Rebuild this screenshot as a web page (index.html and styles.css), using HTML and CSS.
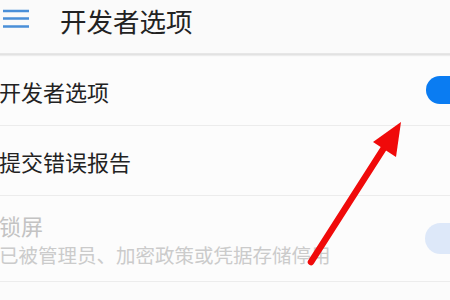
FILE: index.html
```html
<!DOCTYPE html>
<html lang="zh-CN">
<head>
<meta charset="utf-8">
<link rel="stylesheet" href="styles.css">
</head>
<body>
<div class="screen">
  <header class="bar">
    <svg class="menu" width="30" height="30" viewBox="0 0 30 30">
      <path d="M3 5h26M3 12.5h26M3 20.5h26" stroke="#4a8fd8" stroke-width="2.4" fill="none"/>
    </svg>
    <h1 class="title">开发者选项</h1>
  </header>
  <div class="list">
    <div class="row r1">
      <span class="label">开发者选项</span>
      <span class="toggle on"></span>
    </div>
    <div class="row r2">
      <span class="label">提交错误报告</span>
    </div>
    <div class="row r3">
      <div class="texts">
        <span class="label dim">锁屏</span>
        <span class="sub">已被管理员、加密政策或凭据存储停用</span>
      </div>
      <span class="toggle off"></span>
    </div>
  </div>
  <svg class="arrow" width="450" height="300" viewBox="0 0 450 300">
    <line x1="311" y1="262" x2="389" y2="140" stroke="#f00a0a" stroke-width="6.5" stroke-linecap="round"/>
    <polygon points="401,122 373,142 396,157" fill="#f00a0a"/>
  </svg>
</div>
</body>
</html>
```
FILE: styles.css
```css
* { box-sizing: border-box; }
html, body { margin: 0; padding: 0; }
body {
  width: 450px;
  height: 300px;
  overflow: hidden;
  background: #fbfbfb;
  font-family: "Noto Sans CJK SC", "Noto Sans", sans-serif;
  color: #222;
}
.screen {
  position: relative;
  width: 450px;
  height: 300px;
}
.bar {
  height: 53px;
  display: flex;
  align-items: flex-start;
  padding-top: 6px;
  background: #fafafa;
  box-shadow: 0 1px 0 #e6e6e6, 0 2px 0 #e2e2e2, 0 3px 1px #ececec;
  position: relative;
  z-index: 1;
}
.menu { display: block; }
.title {
  margin: 0 0 0 30px;
  font-size: 26.5px;
  line-height: 30px;
  font-weight: 400;
  color: #222;
}
.list {
  margin-top: 3px;
  background: #fcfcfc;
}
.row {
  display: flex;
  align-items: center;
  justify-content: space-between;
  border-bottom: 1px solid #ececec;
  overflow: hidden;
}
.r1 { height: 70px; }
.r2 { height: 70px; }
.r3 { height: 86px; }
.label {
  font-size: 22px;
  line-height: 30px;
  margin-left: -1px;
}
.dim { color: #c3c3c3; }
.texts {
  display: flex;
  flex-direction: column;
  padding-top: 2px;
}
.sub {
  font-size: 19.5px;
  line-height: 30px;
  color: #cbcbcb;
  margin-left: -1px;
  white-space: nowrap;
}
.toggle {
  flex: none;
  width: 50px;
  border-radius: 16px;
}
.on {
  height: 28px;
  background: #0a7cf2;
  margin-right: -26px;
  margin-top: -2px;
}
.off {
  height: 31px;
  background: #dde8f9;
  margin-right: -25px;
}
.arrow {
  position: absolute;
  left: 0;
  top: 0;
  z-index: 2;
}
```
